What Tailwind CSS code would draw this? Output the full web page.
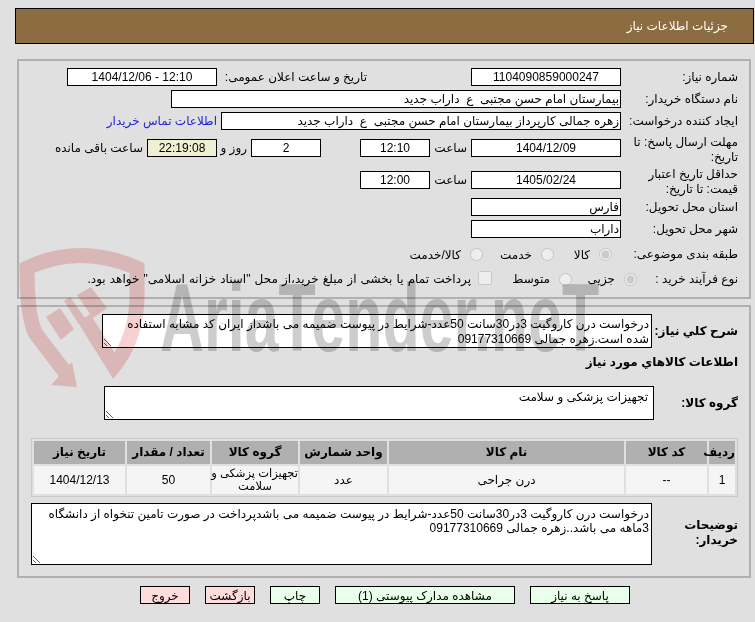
<!DOCTYPE html>
<html lang="fa" dir="rtl">
<head>
<meta charset="UTF-8">
<title>جزئیات اطلاعات نیاز</title>
<script src="https://cdn.jsdelivr.net/npm/@tailwindcss/browser@4"></script>
</head>
<body class="relative w-[755px] h-[622px] overflow-hidden bg-[#e0e0e0] text-[12px] leading-[15px] text-black font-['Liberation_Sans','DejaVu_Sans',sans-serif]">

<!-- header -->
<div class="absolute left-[15px] top-[8px] w-[739px] h-[36px] border border-black bg-[#8c6d42] flex items-center pr-[25px] pt-[1px] text-white">جزئیات اطلاعات نیاز</div>

<!-- first panel -->
<div class="absolute left-[17px] top-[59px] w-[734px] h-[240px] border-2 border-[#b0b0b0] pr-[11px] pt-[7px]">
  <div class="flex items-center h-[18px]">
    <div class="w-[117px] shrink-0">شماره نیاز:</div>
    <div class="w-[150px] h-[18px] border border-black bg-white text-center leading-[17px]">1104090859000247</div>
    <div class="mr-[104px] w-[150px]">تاریخ و ساعت اعلان عمومی:</div>
    <div class="w-[150px] h-[18px] border border-black bg-white text-center leading-[17px]">12:10 - 1404/12/06</div>
  </div>
  <div class="flex items-center h-[18px] mt-[4px]">
    <div class="w-[117px] shrink-0">نام دستگاه خریدار:</div>
    <div class="w-[450px] h-[18px] border border-black bg-white pr-[1px] leading-[17px]">بیمارستان امام حسن مجتبی&nbsp; ع&nbsp; داراب جدید</div>
  </div>
  <div class="flex items-center h-[18px] mt-[4px]">
    <div class="w-[117px] shrink-0">ایجاد کننده درخواست:</div>
    <div class="w-[400px] h-[18px] border border-black bg-white pr-[1px] leading-[17px]">زهره جمالی کارپرداز بیمارستان امام حسن مجتبی&nbsp; ع&nbsp; داراب جدید</div>
    <div class="mr-[4px] text-[#2222dd]">اطلاعات تماس خریدار</div>
  </div>
  <div class="flex items-center h-[18px] mt-[9px]">
    <div class="w-[117px] shrink-0 mt-[3px]">مهلت ارسال پاسخ: تا تاریخ:</div>
    <div class="w-[150px] h-[18px] border border-black bg-white text-center leading-[17px]">1404/12/09</div>
    <div class="w-[41px] pr-[4px]">ساعت</div>
    <div class="w-[70px] h-[18px] border border-black bg-white text-center leading-[17px]">12:10</div>
    <div class="w-[39px]"></div>
    <div class="w-[70px] h-[18px] border border-black bg-white text-center leading-[17px]">2</div>
    <div class="w-[34px] pr-[4px]">روز و</div>
    <div class="w-[70px] h-[18px] border border-black bg-[#efefd2] text-center leading-[17px]">22:19:08</div>
    <div class="mr-[4px]">ساعت باقی مانده</div>
  </div>
  <div class="flex items-center h-[18px] mt-[14px]">
    <div class="w-[117px] shrink-0 mt-[3px]">حداقل تاریخ اعتبار قیمت: تا تاریخ:</div>
    <div class="w-[150px] h-[18px] border border-black bg-white text-center leading-[17px]">1405/02/24</div>
    <div class="w-[41px] pr-[4px]">ساعت</div>
    <div class="w-[70px] h-[18px] border border-black bg-white text-center leading-[17px]">12:00</div>
  </div>
  <div class="flex items-center h-[18px] mt-[9px]">
    <div class="w-[117px] shrink-0">استان محل تحویل:</div>
    <div class="w-[150px] h-[18px] border border-black bg-white pr-[1px] leading-[17px]">فارس</div>
  </div>
  <div class="flex items-center h-[18px] mt-[4px]">
    <div class="w-[117px] shrink-0">شهر محل تحویل:</div>
    <div class="w-[150px] h-[18px] border border-black bg-white pr-[1px] leading-[17px]">داراب</div>
  </div>
  <div class="flex items-center h-[18px] mt-[7px]">
    <div class="w-[126px] shrink-0">طبقه بندی موضوعی:</div>
    <input type="radio" checked disabled class="w-[13px] h-[13px] m-0 ml-[9px]">
    <div class="w-[36px] pt-[2px]">کالا</div>
    <input type="radio" disabled class="w-[13px] h-[13px] m-0 ml-[9px]">
    <div class="w-[49px] pt-[2px]">خدمت</div>
    <input type="radio" disabled class="w-[13px] h-[13px] m-0 ml-[9px]">
    <div class="pt-[2px]">کالا/خدمت</div>
  </div>
  <div class="flex items-center h-[18px] mt-[7px]">
    <div class="w-[101px] shrink-0">نوع فرآیند خرید :</div>
    <input type="radio" checked disabled class="w-[13px] h-[13px] m-0 ml-[9px]">
    <div class="w-[43px]">جزیی</div>
    <input type="radio" disabled class="w-[13px] h-[13px] m-0 ml-[9px]">
    <div class="w-[58px]">متوسط</div>
    <input type="checkbox" disabled class="w-[14px] h-[14px] m-0 ml-[7px] mb-[3px]">
    <div class="whitespace-nowrap [word-spacing:0.8px]">پرداخت تمام یا بخشی از مبلغ خرید،از محل "اسناد خزانه اسلامی" خواهد بود.</div>
  </div>
</div>

<!-- second panel -->
<div class="absolute left-[17px] top-[305px] w-[734px] h-[273px] border-2 border-[#b0b0b0] pr-[11px]">
  <div class="flex items-start h-[34px] mt-[7px]">
    <div class="w-[86px] shrink-0 font-bold mt-[10px]">شرح کلي نياز:</div>
    <textarea disabled rows="2" class="w-[550px] h-[34px] border border-black bg-white text-black px-[2px] pt-[2px] pb-0 overflow-hidden leading-[15px]">درخواست درن کاروگیت 3در30سانت 50عدد-شرایط در پیوست ضمیمه می باشداز ایران کد مشابه استفاده
شده است.زهره جمالی 09177310669</textarea>
  </div>
  <div class="font-bold mt-[7px]">اطلاعات کالاهاي مورد نياز</div>
  <div class="flex items-start h-[34px] mt-[16px]">
    <div class="w-[84px] shrink-0 font-bold mt-[10px]">گروه کالا:</div>
    <textarea disabled rows="1" class="w-[550px] h-[34px] border border-black bg-white text-black px-[5px] pt-[3px] pb-0 overflow-hidden leading-[15px]">تجهیزات پزشکی و سلامت</textarea>
  </div>

  <table class="mt-[18px] w-[707px] table-fixed border-separate border-spacing-[2px] border border-[#c8c8c8] text-center">
    <colgroup>
      <col class="w-[26px]"><col class="w-[81px]"><col class="w-[235px]"><col class="w-[87px]"><col class="w-[86px]"><col class="w-[83px]"><col class="w-[91px]">
    </colgroup>
    <thead>
      <tr class="h-[23px] bg-[#b0b0b0] font-bold">
        <th>رديف</th><th>کد کالا</th><th>نام کالا</th><th>واحد شمارش</th><th>گروه کالا</th><th>تعداد / مقدار</th><th>تاریخ نیاز</th>
      </tr>
    </thead>
    <tbody>
      <tr class="h-[28px] bg-[#f5f5f5]">
        <td>1</td><td>--</td><td>درن جراحی</td><td>عدد</td><td class="text-[11.5px] leading-[13px] whitespace-nowrap">تجهیزات پزشکی و<br>سلامت</td><td>50</td><td>1404/12/13</td>
      </tr>
    </tbody>
  </table>

  <div class="flex items-start h-[62px] mt-[6px]">
    <div class="w-[86px] shrink-0 font-bold mt-[15px]">توضیحات خریدار:</div>
    <textarea disabled class="w-[621px] h-[62px] border border-black bg-white text-black px-[2px] pt-[3px] pb-0 overflow-hidden leading-[14px]">درخواست درن کاروگیت 3در30سانت 50عدد-شرایط در پیوست ضمیمه می باشدپرداخت در صورت تامین تنخواه از دانشگاه
3ماهه می باشد..زهره جمالی 09177310669</textarea>
  </div>
</div>

<!-- buttons -->
<div class="absolute right-[125px] top-[586px] flex gap-[15px] text-center leading-[18px]">
  <div class="w-[100px] h-[18px] border border-black bg-[#eaffea]">پاسخ به نیاز</div>
  <div class="w-[180px] h-[18px] border border-black bg-[#eaffea]">مشاهده مدارک پیوستی (1)</div>
  <div class="w-[50px] h-[18px] border border-black bg-[#eaffea]">چاپ</div>
  <div class="w-[50px] h-[18px] border border-black bg-[#ffdcdc]">بازگشت</div>
  <div class="w-[50px] h-[18px] border border-black bg-[#ffdcdc]">خروج</div>
</div>

<!-- watermark -->
<svg class="absolute left-0 top-0 mix-blend-multiply pointer-events-none" width="755" height="622" viewBox="0 0 755 622" fill="none">
  <path d="M68 376 L36 334 Q27 318 27 268 Q80 243 137 268 L137 300 Q135 340 114 366 L84 318" stroke="#f7d1d1" stroke-width="15"/>
  <path d="M51 385 L72 362 L77 387 Z" fill="#f7d1d1"/>
  <path d="M46 317 L60 308 L74 329 L61 340 Z M64 301 L70 297 L85 318 L78 323 Z M77 295 L91 287 L107 308 L93 318 Z" fill="#f7d1d1"/>
</svg>
<div dir="ltr" class="absolute left-[160px] top-[268px] mix-blend-multiply pointer-events-none origin-left scale-x-[0.635] whitespace-nowrap text-[96px] leading-[100px] font-bold text-[#cdcdcd] font-['Liberation_Sans',sans-serif]">AriaTender.neT</div>

</body>
</html>
